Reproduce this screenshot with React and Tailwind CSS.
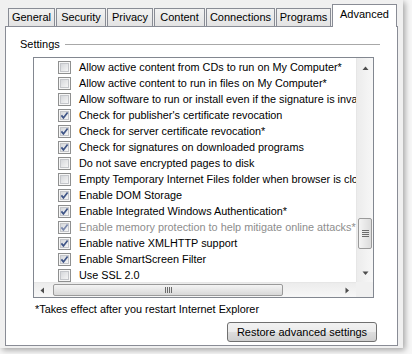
import React from "react";

const rows = [
  [false, "Allow active content from CDs to run on My Computer*"],
  [false, "Allow active content to run in files on My Computer*"],
  [false, "Allow software to run or install even if the signature is invalid"],
  [true, "Check for publisher's certificate revocation"],
  [true, "Check for server certificate revocation*"],
  [true, "Check for signatures on downloaded programs"],
  [false, "Do not save encrypted pages to disk"],
  [false, "Empty Temporary Internet Files folder when browser is closed"],
  [true, "Enable DOM Storage"],
  [true, "Enable Integrated Windows Authentication*"],
  [true, "Enable memory protection to help mitigate online attacks*", true],
  [true, "Enable native XMLHTTP support"],
  [true, "Enable SmartScreen Filter"],
  [false, "Use SSL 2.0"],
];

function Box({ checked, disabled }) {
  return (
    <svg width="13" height="13" viewBox="0 0 13 13" className="shrink-0">
      <defs>
        <linearGradient id="cbg" x1="0" y1="0" x2="1" y2="1">
          <stop offset="0" stopColor="#d3d5d9" />
          <stop offset="1" stopColor="#f7f7f7" />
        </linearGradient>
      </defs>
      <rect x="0.5" y="0.5" width="12" height="12" fill="#f6f6f6" stroke="#8e8f8f" />
      <rect x="2.5" y="2.5" width="8" height="8" fill="url(#cbg)" stroke="#c4c6ca" />
      {checked && (
        <path
          d="M3.4 6.4 L5.4 8.9 L9.6 3.4"
          fill="none"
          stroke={disabled ? "#7b89ad" : "#3f5587"}
          strokeWidth="1.7"
        />
      )}
    </svg>
  );
}

const tabs = [
  ["General", "w-[47px]"],
  ["Security", "w-[50px]"],
  ["Privacy", "w-[46px]"],
  ["Content", "w-[51px]"],
  ["Connections", "w-[69px]"],
  ["Programs", "w-[55px]"],
];

function Tri({ dir }) {
  if (dir === "left" || dir === "right") {
    const p = dir === "left" ? "M4 0.5 L0.5 3.5 L4 6.5 Z" : "M0.5 0.5 L4 3.5 L0.5 6.5 Z";
    return (
      <svg width="5" height="7" viewBox="0 0 5 7">
        <path d={p} fill="#4d4d4d" />
      </svg>
    );
  }
  const d = dir === "up" ? "M0.5 4 L3.5 0.5 L6.5 4 Z" : "M0.5 0.5 L3.5 4 L6.5 0.5 Z";
  return (
    <svg width="7" height="5" viewBox="0 0 7 5">
      <path d={d} fill="#4d4d4d" />
    </svg>
  );
}

export default function App() {
  return (
    <div className="w-[412px] h-[354px] bg-[#f7f7f7] overflow-hidden font-['Liberation_Sans',Arial,sans-serif] text-[10.85px] text-black">
      <div className="w-[403px] h-[348px] bg-[#f0f0f0] shadow-[2px_2px_6px_rgba(0,0,0,0.35)] pt-[5px] pl-[5px]">
        {/* tabs */}
        <div className="flex items-end h-[21px] pl-[3px] gap-[1px]">
          {tabs.map(([t, w]) => (
            <div
              key={t}
              className={`${w} h-[19px] -mb-px border border-[#898c95] bg-gradient-to-b from-[#f2f2f2] to-[#e3e3e3] flex items-center justify-center leading-none text-[11px]`}
            >
              {t}
            </div>
          ))}
          <div className="w-[65px] h-[23px] -mb-px relative z-10 border border-b-0 border-[#898c95] bg-white flex justify-center pt-[4px] leading-none text-[11px]">
            Advanced
          </div>
        </div>
        {/* panel */}
        <div className="w-[393px] h-[320px] border border-[#898c95] bg-white flex flex-col">
          <div className="flex items-center mt-[9px] pl-[14px] pr-[17px] h-[16px] text-[11px]">
            <span>Settings</span>
            <div className="flex-1 ml-[5px] h-px bg-[#a8a8a8]" />
          </div>
          <div className="ml-[27px] mt-[5px] w-[341px] h-[241px] border border-[#828790] grid grid-cols-[322px_17px] grid-rows-[224px_15px]">
            <div className="overflow-hidden pt-px">
              {rows.map(([c, t, dis]) => (
                <div key={t} className="h-[16px] flex items-center pl-[24px] whitespace-nowrap">
                  <Box checked={c} disabled={dis} />
                  <span className={`ml-[8px] ${dis ? "text-[#8d8d8d]" : ""}`}>{t}</span>
                </div>
              ))}
            </div>
            {/* vertical scrollbar */}
            <div className="flex flex-col bg-gradient-to-r from-[#ececec] to-[#f7f7f7] border-l border-[#e6e6e6]">
              <div className="h-[18px] flex items-center justify-center pt-[2px]">
                <Tri dir="up" />
              </div>
              <div className="h-[142px]" />
              <div className="h-[31px] mx-px rounded-[2px] border border-[#9a9a9a] bg-gradient-to-r from-[#f4f4f4] to-[#dcdcdc] flex flex-col items-center justify-center gap-[1px]">
                <div className="w-[7px] h-px bg-[#6b6b6b]" />
                <div className="w-[7px] h-px bg-[#6b6b6b]" />
                <div className="w-[7px] h-px bg-[#6b6b6b]" />
                <div className="w-[7px] h-px bg-[#6b6b6b]" />
              </div>
              <div className="flex-1" />
              <div className="h-[17px] flex items-center justify-center">
                <Tri dir="down" />
              </div>
            </div>
            {/* horizontal scrollbar */}
            <div className="flex items-stretch bg-gradient-to-b from-[#ececec] to-[#f7f7f7] border-t border-[#e6e6e6]">
              <div className="w-[17px] flex items-center justify-center">
                <Tri dir="left" />
              </div>
              <div className="w-[2px]" />
              <div className="w-[230px] my-px rounded-[2px] border border-[#9a9a9a] bg-gradient-to-b from-[#f4f4f4] to-[#d8d8d8] flex items-center justify-center gap-[1px]">
                <div className="w-px h-[6px] bg-[#6b6b6b]" />
                <div className="w-px h-[6px] bg-[#6b6b6b]" />
                <div className="w-px h-[6px] bg-[#6b6b6b]" />
                <div className="w-px h-[6px] bg-[#6b6b6b]" />
              </div>
              <div className="flex-1" />
              <div className="w-[17px] flex items-center justify-center">
                <Tri dir="right" />
              </div>
            </div>
            <div className="bg-[#f0f0f0]" />
          </div>
          <div className="ml-[29px] mt-[4px] h-[14px] leading-[14px]">
            *Takes effect after you restart Internet Explorer
          </div>
          <div className="flex justify-end pr-[20px] mt-[6px]">
            <div className="w-[150px] h-[20px] rounded-[3px] border border-[#707070] bg-[linear-gradient(#f2f2f2_0%,#ebebeb_50%,#dddddd_51%,#cfcfcf_100%)] flex items-center justify-center leading-none text-[11px]">
              Restore advanced settings
            </div>
          </div>
        </div>
      </div>
    </div>
  );
}
